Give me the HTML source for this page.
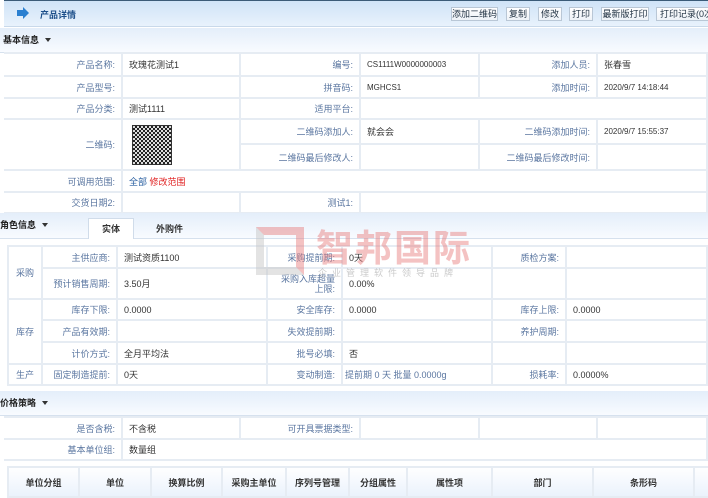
<!DOCTYPE html>
<html><head><meta charset="utf-8"><style>
*{margin:0;padding:0;box-sizing:border-box}
body{width:708px;height:493px;overflow:hidden;background:#fff;font-family:"Liberation Sans","Noto Sans CJK SC",sans-serif;font-size:9px;color:#333;position:relative}
.a{position:absolute}
.hdr{left:4px;top:0;width:704px;height:27px;background:linear-gradient(#cfe3f7,#e8f2fc);border-top:1px solid #3b5b78;border-bottom:1px solid #c9d9ea}
.btn{position:absolute;top:7px;height:14px;border:1px solid #b9c7d6;background:linear-gradient(#fff,#eef3f8);font-size:9px;line-height:12px;text-align:center;color:#234;white-space:nowrap;overflow:hidden}
.sec{left:4px;width:704px;height:25px;background:linear-gradient(#e4eefa,#f8fbff);border-bottom:1px solid #d6e1ee;font-weight:bold;font-size:9px;line-height:25px;color:#222}
.tri{display:inline-block;width:0;height:0;border-left:3px solid transparent;border-right:3px solid transparent;border-top:4px solid #333;margin-left:6px;vertical-align:1px}
table{border-collapse:collapse;position:absolute;table-layout:fixed}
td{border:2px solid #e6ecf3;padding:0 6px;white-space:nowrap;overflow:hidden}
td.l{text-align:right;color:#5a76a0}
.b td{border-left:none}
.wm{color:rgba(230,120,120,.45);font-size:37px;font-weight:bold;letter-spacing:2px}
</style></head><body>
<div class="a hdr"></div>
<div class="a" style="left:17px;top:10px;width:7px;height:6px;background:#2a7fd0"></div>
<div class="a" style="left:23px;top:7px;width:0;height:0;border-top:6px solid transparent;border-bottom:6px solid transparent;border-left:6px solid #2a7fd0"></div>
<div class="a" style="left:40px;top:8px;font-weight:bold;color:#1d4f8a;font-size:9px">产品详情</div>
<div class="btn" style="left:451px;width:47px">添加二维码</div>
<div class="btn" style="left:506px;width:24px">复制</div>
<div class="btn" style="left:538px;width:24px">修改</div>
<div class="btn" style="left:569px;width:24px">打印</div>
<div class="btn" style="left:601px;width:48px">最新版打印</div>
<div class="btn" style="left:656px;width:60px;text-align:left;padding-left:3px">打印记录(0次)</div>

<div class="a sec" style="top:28px;left:0;width:708px"><span style="margin-left:3px">基本信息</span><i class="tri"></i></div>

<table class="b" style="left:4px;top:52px;width:704px">
<colgroup><col style="width:118px"><col style="width:118px"><col style="width:120px"><col style="width:119px"><col style="width:118px"><col></colgroup>
<tr style="height:23px"><td class="l">产品名称:</td><td>玫瑰花测试1</td><td class="l">编号:</td><td style="font-size:8px">CS1111W0000000003</td><td class="l">添加人员:</td><td>张春雪</td></tr>
<tr style="height:22px"><td class="l">产品型号:</td><td></td><td class="l">拼音码:</td><td style="font-size:8px">MGHCS1</td><td class="l">添加时间:</td><td style="font-size:8px">2020/9/7 14:18:44</td></tr>
<tr style="height:21px"><td class="l">产品分类:</td><td>测试1111</td><td class="l">适用平台:</td><td colspan="3"></td></tr>
<tr style="height:25px"><td class="l" rowspan="2">二维码:</td><td rowspan="2" style="padding:0"><div style="width:38px;height:38px;margin-left:10px;background:repeating-conic-gradient(#222 0 25%,#ddd 0 50%) 0 0/4px 4px;outline:1px solid #333"></div></td><td class="l">二维码添加人:</td><td>就会会</td><td class="l">二维码添加时间:</td><td style="font-size:8px">2020/9/7 15:55:37</td></tr>
<tr style="height:26px"><td class="l">二维码最后修改人:</td><td></td><td class="l">二维码最后修改时间:</td><td></td></tr>
<tr style="height:22px"><td class="l">可调用范围:</td><td colspan="5"><span style="color:#2a5fa0">全部</span> <span style="color:#e02020">修改范围</span></td></tr>
<tr style="height:21px"><td class="l">交货日期2:</td><td></td><td class="l">测试1:</td><td colspan="3"></td></tr>
</table>

<div class="a sec" style="top:213px;left:0;width:708px;height:26px"><span style="margin-left:0">角色信息</span><i class="tri"></i></div>
<div class="a" style="left:88px;top:218px;width:46px;height:21px;background:#fff;border:1px solid #d0dcea;border-bottom:none;text-align:center;line-height:20px;font-weight:bold">实体</div>
<div class="a" style="left:156px;top:222px;font-weight:bold">外购件</div>

<table style="left:7px;top:245px;width:701px">
<colgroup><col style="width:34px"><col style="width:75px"><col style="width:150px"><col style="width:75px"><col style="width:150px"><col style="width:74px"><col></colgroup>
<tr style="height:22px"><td rowspan="2" style="text-align:center;color:#5a76a0">采购</td><td class="l">主供应商:</td><td>测试资质1100</td><td class="l">采购提前期:</td><td>0天</td><td class="l">质检方案:</td><td></td></tr>
<tr style="height:31px"><td class="l">预计销售周期:</td><td>3.50月</td><td class="l" style="white-space:normal;line-height:10px">采购入库超量上限:</td><td>0.00%</td><td></td><td></td></tr>
<tr style="height:21px"><td rowspan="3" style="text-align:center;color:#5a76a0">库存</td><td class="l">库存下限:</td><td>0.0000</td><td class="l">安全库存:</td><td>0.0000</td><td class="l">库存上限:</td><td>0.0000</td></tr>
<tr style="height:22px"><td class="l">产品有效期:</td><td></td><td class="l">失效提前期:</td><td></td><td class="l">养护周期:</td><td></td></tr>
<tr style="height:22px"><td class="l">计价方式:</td><td>全月平均法</td><td class="l">批号必填:</td><td>否</td><td></td><td></td></tr>
<tr style="height:21px"><td style="text-align:center;color:#5a76a0">生产</td><td class="l">固定制造提前:</td><td>0天</td><td class="l">变动制造:</td><td style="color:#5a76a0;padding-left:2px">提前期 0 天 批量 0.0000g</td><td class="l">损耗率:</td><td>0.0000%</td></tr>
</table>

<div class="a" style="left:256px;top:227px;width:48px;height:48px;border:8px solid rgba(200,200,200,.5);border-top-color:rgba(230,120,120,.45);border-right-color:rgba(230,120,120,.45)"></div>
<div class="a wm" style="left:316px;top:218px">智邦国际</div>
<div class="a" style="left:318px;top:266px;color:rgba(150,150,150,.5);font-size:9px;letter-spacing:5px">企业管理软件领导品牌</div>

<div class="a sec" style="top:391px;left:0;width:708px"><span style="margin-left:0">价格策略</span><i class="tri"></i></div>
<table class="b" style="left:4px;top:416px;width:704px">
<colgroup><col style="width:118px"><col style="width:118px"><col style="width:120px"><col style="width:119px"><col style="width:118px"><col></colgroup>
<tr style="height:22px"><td class="l">是否含税:</td><td>不含税</td><td class="l">可开具票据类型:</td><td></td><td></td><td></td></tr>
<tr style="height:21px"><td class="l">基本单位组:</td><td colspan="5">数量组</td></tr>
</table>

<table style="left:7px;top:466px;width:710px;background:linear-gradient(#fff,#eaf2fc)">
<colgroup><col style="width:71px"><col style="width:72px"><col style="width:71px"><col style="width:64px"><col style="width:63px"><col style="width:58px"><col style="width:85px"><col style="width:101px"><col style="width:101px"><col></colgroup>
<tr style="height:30px;font-weight:bold;text-align:center"><td>单位分组</td><td>单位</td><td>换算比例</td><td>采购主单位</td><td>序列号管理</td><td>分组属性</td><td>属性项</td><td>部门</td><td>条形码</td><td></td></tr>
</table>
</body></html>
